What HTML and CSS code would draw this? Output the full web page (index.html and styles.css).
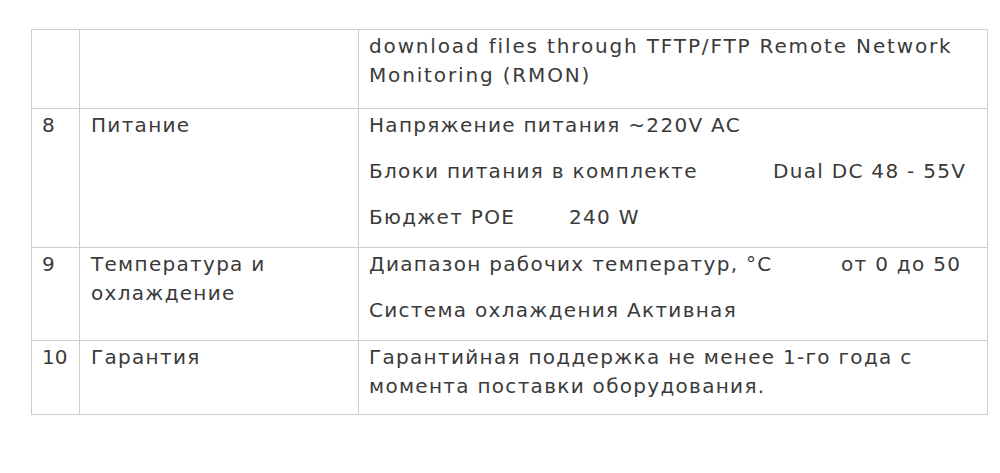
FILE: index.html
```html
<!DOCTYPE html>
<html lang="ru">
<head>
<meta charset="utf-8">
<link rel="stylesheet" href="styles.css">
</head>
<body>
<table class="spec">
  <tr class="r1">
    <td class="num"></td>
    <td class="name"></td>
    <td class="val"><div class="ln latin">download files through TFTP/FTP Remote Network Monitoring (RMON)</div></td>
  </tr>
  <tr class="r8">
    <td class="num">8</td>
    <td class="name">Питание</td>
    <td class="val">
      <div class="ln">Напряжение питания ~220V AC</div>
      <div class="ln"><span class="lab lab-psu">Блоки питания в комплекте</span>Dual DC 48 - 55V</div>
      <div class="ln"><span class="lab lab-poe">Бюджет POE</span>240 W</div>
    </td>
  </tr>
  <tr class="r9">
    <td class="num">9</td>
    <td class="name">Температура и охлаждение</td>
    <td class="val">
      <div class="ln"><span class="lab lab-temp">Диапазон рабочих температур, °C</span>от 0 до 50</div>
      <div class="ln">Система охлаждения Активная</div>
    </td>
  </tr>
  <tr class="r10">
    <td class="num">10</td>
    <td class="name">Гарантия</td>
    <td class="val"><div class="ln">Гарантийная поддержка не менее 1-го года с момента поставки оборудования.</div></td>
  </tr>
</table>
</body>
</html>
```
FILE: styles.css
```css
html, body {
  margin: 0;
  padding: 0;
  background: #ffffff;
}
body {
  font-family: "DejaVu Sans", "Noto Sans", sans-serif;
  color: #3a3a3a;
  font-size: 20px;
  line-height: 29px;
  letter-spacing: 1.3px;
}
.spec {
  border-collapse: collapse;
  margin: 29px 0 0 31px;
  width: 957px;
  table-layout: fixed;
}
.spec td {
  border: 1px solid #cdcdcd;
  vertical-align: top;
  padding: 2px 10px 0 10px;
}
.spec td.num { width: 48px; box-sizing: border-box; letter-spacing: 0; }
.spec td.name { width: 279px; box-sizing: border-box; padding-left: 11px; }
.ln + .ln { margin-top: 17px; }
.latin { letter-spacing: 1.85px; }
.lab { display: inline-block; }
.lab-psu { width: 404px; }
.lab-poe { width: 200px; }
.lab-temp { width: 472px; }
.r1 { height: 79px; }
.r8 { height: 139px; }
.r9 { height: 93px; }
.r10 { height: 74px; }
```
